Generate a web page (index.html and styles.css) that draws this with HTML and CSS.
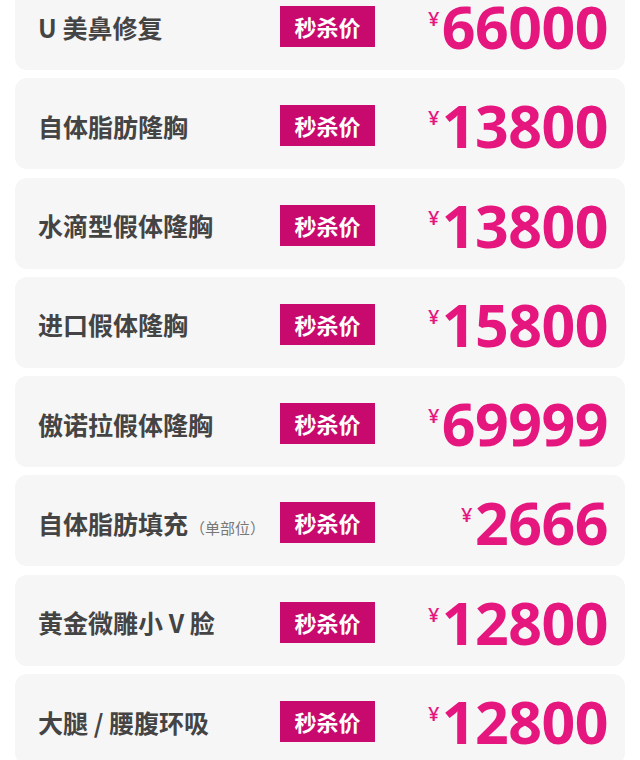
FILE: index.html
```html
<!DOCTYPE html>
<html lang="zh-CN">
<head>
    <meta charset="UTF-8">
    <meta name="viewport" content="width=device-width, initial-scale=1.0">
    <title>秒杀价</title>
    <link rel="stylesheet" href="styles.css">
</head>
<body>

    <div class="list">
        <div class="item">
            <div class="name">U 美鼻修复</div>
            <div class="badge">秒杀价</div>
            <div class="price"><span class="yen">¥</span>66000</div>
        </div>
        <div class="item">
            <div class="name">自体脂肪隆胸</div>
            <div class="badge">秒杀价</div>
            <div class="price"><span class="yen">¥</span>13800</div>
        </div>
        <div class="item">
            <div class="name">水滴型假体隆胸</div>
            <div class="badge">秒杀价</div>
            <div class="price"><span class="yen">¥</span>13800</div>
        </div>
        <div class="item">
            <div class="name">进口假体隆胸</div>
            <div class="badge">秒杀价</div>
            <div class="price"><span class="yen">¥</span>15800</div>
        </div>
        <div class="item">
            <div class="name">傲诺拉假体隆胸</div>
            <div class="badge">秒杀价</div>
            <div class="price"><span class="yen">¥</span>69999</div>
        </div>
        <div class="item">
            <div class="name">自体脂肪填充<span class="note">（单部位）</span></div>
            <div class="badge">秒杀价</div>
            <div class="price"><span class="yen">¥</span>2666</div>
        </div>
        <div class="item">
            <div class="name">黄金微雕小 V 脸</div>
            <div class="badge">秒杀价</div>
            <div class="price"><span class="yen">¥</span>12800</div>
        </div>
        <div class="item">
            <div class="name">大腿 / 腰腹环吸</div>
            <div class="badge">秒杀价</div>
            <div class="price"><span class="yen">¥</span>12800</div>
        </div>
    </div>

</body>
</html>
```

FILE: styles.css
```css
body {
    font-family: "Noto Sans CJK SC", "Noto Sans", sans-serif;
    background-color: #FFFFFF;
    color: #444444;
    margin: 0;
    overflow: hidden;
}
.list {
    padding: 0 15px;
    margin-top: -21px;
}
.item {
    display: flex;
    align-items: center;
    height: 91px;
    padding: 4px 17px 0 23px;
    box-sizing: border-box;
    margin-bottom: 8.3px;
    background: #F6F6F7;
    border-radius: 12px;
}
.name {
    width: 242px;
    font-size: 25px;
    font-weight: bold;
    color: #444444;
    white-space: nowrap;
}
.note {
    font-size: 15px;
    font-weight: normal;
    color: #777777;
    margin-left: 2px;
}
.badge {
    width: 95px;
    height: 41px;
    line-height: 41px;
    text-align: center;
    background: #C8096D;
    color: #FFFFFF;
    font-size: 22px;
    font-weight: bold;
}
.price {
    margin-left: auto;
    font-family: "Open Sans", "Liberation Sans", sans-serif;
    font-weight: bold;
    font-size: 59px;
    line-height: 1;
    color: #E5177F;
    letter-spacing: -0.5px;
}
.yen {
    font-size: 20px;
    vertical-align: top;
    position: relative;
    top: 12px;
    margin-right: 3px;
    font-weight: 600;
}
```
